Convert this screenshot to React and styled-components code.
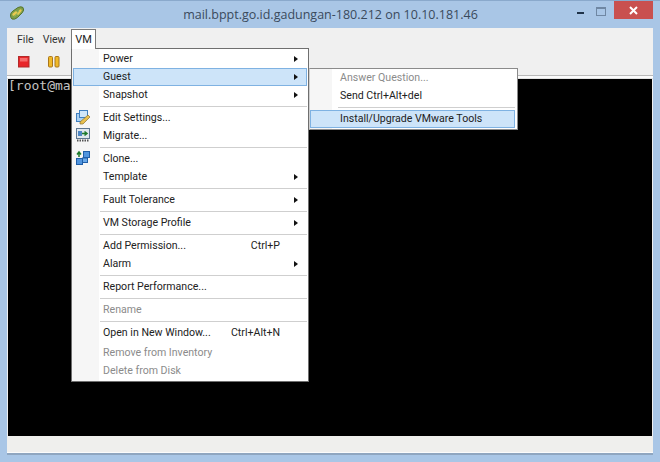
import React from 'react';
import styled, { createGlobalStyle } from 'styled-components';

const Global = createGlobalStyle`
  html, body { margin: 0; padding: 0; background: #a9c6e6; }
  body { font-family: Roboto, "Open Sans", sans-serif; font-size: 10.6px; line-height: 14px; color: #1c1c1c; }
`;

const Frame = styled.div`
  position: relative;
  width: 660px;
  height: 462px;
  box-sizing: border-box;
  padding: 0 7px 7px 7px;
  display: flex;
  flex-direction: column;
  background: #a9c6e6;
  border-top: 1px solid #8aa9cc;
  overflow: hidden;
`;

const TitleBar = styled.div`
  height: 27px;
  flex: none;
  display: flex;
  align-items: flex-start;
`;

const AppIcon = styled.svg`
  width: 16px;
  height: 16px;
  margin: 4px 0 0 2px;
  flex: none;
`;

const Title = styled.div`
  flex: 1;
  text-align: center;
  font-family: "Open Sans", sans-serif;
  font-size: 12.5px;
  line-height: 27px;
  color: #3a4a5c;
  padding-left: 59px;
`;

const Controls = styled.div`
  display: flex;
  align-items: flex-start;
  flex: none;
`;

const MinButton = styled.div`
  width: 7px;
  height: 2px;
  background: #1f3248;
  margin: 11px 12px 0 0;
`;

const MaxButton = styled.div`
  width: 8px;
  height: 6px;
  box-sizing: content-box;
  border: 1px solid #6f87a3;
  border-top-width: 2px;
  margin: 6px 8px 0 0;
`;

const CloseButton = styled.div`
  width: 39px;
  height: 18px;
  background: #c9504f;
  color: #fff;
  display: flex;
  align-items: center;
  justify-content: center;
`;

const Client = styled.div`
  flex: 1;
  display: flex;
  flex-direction: column;
  background: #f0f0f0;
  min-height: 0;
  border-bottom: 2px solid #8fa6c0;
`;

const MenuBar = styled.div`
  height: 20px;
  flex: none;
  display: flex;
  align-items: center;
  padding: 3px 0 0 10px;
  box-sizing: border-box;
  gap: 9px;
  color: #333;
`;

const MenuBarItem = styled.span`
  line-height: 17px;
`;

const Toolbar = styled.div`
  height: 27px;
  flex: none;
  display: flex;
  align-items: flex-start;
  padding: 8px 0 0 11px;
  gap: 18px;
  box-sizing: border-box;
`;

const ToolIcon = styled.svg`
  width: 12px;
  height: 12px;
  flex: none;
`;

const Rule = styled.div`
  height: 4px;
  flex: none;
  box-sizing: border-box;
  background: #fbfbfb;
  border-top: 1px solid #b9b9b9;
  border-bottom: 1px solid #e2e2e2;
`;

const Console = styled.div`
  flex: 1;
  margin: 0 1px;
  background: #000;
  color: #c4c4c4;
  font-family: "DejaVu Sans Mono", monospace;
  font-size: 13px;
  line-height: 14px;
  white-space: pre;
  overflow: hidden;
`;

const StatusBar = styled.div`
  height: 16px;
  flex: none;
  background: #efefed;
  border-bottom: 1px solid #fbfbfb;
`;

const VmTab = styled.div`
  position: absolute;
  left: 71px;
  top: 28px;
  width: 25px;
  height: 20px;
  box-sizing: border-box;
  background: #fff;
  border: 1px solid #7a7a7a;
  border-bottom: none;
  color: #222;
  font-size: 11px;
  text-align: center;
  line-height: 19px;
  z-index: 3;
`;

const DropMenu = styled.div`
  position: absolute;
  left: 71px;
  top: 47px;
  width: 238px;
  height: 334px;
  box-sizing: border-box;
  padding: 1px 1px 0;
  background: linear-gradient(90deg, #f6f6f6 0, #f6f6f6 27px, #fff 27px);
  border: 1px solid #6f6f6f;
  z-index: 2;
`;

const Row = styled.div`
  position: relative;
  height: 18px;
  box-sizing: border-box;
  display: flex;
  align-items: center;
  padding: 0 8px 0 29px;
  margin-top: ${(p) => p.$gap || 0}px;
  color: ${(p) => (p.$disabled ? '#8b8b8b' : '#222')};
  background: ${(p) => (p.$active ? '#cde4f9' : 'transparent')};
  border: 1px solid ${(p) => (p.$active ? '#7fb2e2' : 'transparent')};
`;

const RowLabel = styled.span`
  flex: 1;
  white-space: nowrap;
`;

const Shortcut = styled.span`
  position: absolute;
  right: 26px;
  white-space: nowrap;
`;

const Arrow = styled.span`
  width: 0;
  height: 0;
  border-left: 4px solid #111;
  border-top: 3.5px solid transparent;
  border-bottom: 3.5px solid transparent;
`;

const RowIcon = styled.svg`
  position: absolute;
  left: 1px;
  top: -1px;
  width: 16px;
  height: 16px;
`;

const Divider = styled.div`
  height: 5px;
  margin-left: 27px;
  display: flex;
  align-items: center;
  &::after {
    content: '';
    flex: 1;
    height: 1px;
    background: #cfcfcf;
  }
`;

const SubMenu = styled.div`
  position: absolute;
  left: 309px;
  top: 67px;
  width: 209px;
  height: 62px;
  box-sizing: border-box;
  padding: 0 2px 0 0;
  background: linear-gradient(90deg, #f6f6f6 0, #f6f6f6 22px, #fff 22px);
  border: 1px solid #8b8b8b;
  border-left-color: #d0d0d0;
  z-index: 4;
`;

const SubRow = styled(Row)`
  padding-left: 29px;
`;

const SubDivider = styled(Divider)`
  margin-left: 28px;
`;

const LinkIcon = () => (
  <AppIcon viewBox="0 0 16 16">
    <path d="M1.5 10 Q1.5 7.5 4 6 L9 2.5 Q12 1 14 2.5 Q15.5 5 13.5 7.5 L8.5 12.5 Q5.5 15 3 14 Q1.5 13 1.5 10 Z" fill="#7e9f4a" stroke="#56752c" />
    <path d="M4.5 9.5 L7 7.5 M9 8.5 L11.5 5.5" fill="none" stroke="#e9c94f" strokeWidth="2.4" strokeLinecap="round" />
    <path d="M5.5 11.5 L10 6" fill="none" stroke="#9ab85a" strokeWidth="1" />
  </AppIcon>
);

const StopIcon = () => (
  <ToolIcon viewBox="0 0 12 12">
    <rect x="0.5" y="0.5" width="10.5" height="10.5" fill="#e8262a" stroke="#b22a2a" />
    <rect x="2" y="2" width="7.5" height="3.5" fill="#f56a6a" />
  </ToolIcon>
);

const PauseIcon = () => (
  <ToolIcon viewBox="0 0 12 12">
    <rect x="0.5" y="0.5" width="4" height="10.5" rx="1" fill="#f0b928" stroke="#a9761a" />
    <rect x="7" y="0.5" width="4" height="10.5" rx="1" fill="#f0b928" stroke="#a9761a" />
  </ToolIcon>
);

const EditIcon = () => (
  <RowIcon viewBox="0 0 16 16">
    <rect x="1.5" y="4.5" width="8" height="8" fill="#a9d0f2" stroke="#3f7fc0" />
    <rect x="4.5" y="1.5" width="8" height="7" fill="#cfe6fa" stroke="#3f7fc0" />
    <path d="M13 6 L15 8 L8 15 L5 15 L5 13 Z" fill="#e9c04e" stroke="#8a7330" strokeWidth="0.7" />
  </RowIcon>
);

const MigrateIcon = () => (
  <RowIcon viewBox="0 0 16 16">
    <rect x="1.5" y="1.5" width="13" height="10" fill="#dfe7ee" stroke="#5d7690" />
    <rect x="3" y="4" width="4" height="5" fill="#4d86c4" />
    <path d="M7 6.5 H11 M9.5 4.5 L12 6.5 L9.5 8.5" fill="none" stroke="#1e7a2c" strokeWidth="1.5" />
    <path d="M2 13.5 H14" stroke="#555" strokeWidth="2" strokeDasharray="1.5 1" />
  </RowIcon>
);

const CloneIcon = () => (
  <RowIcon viewBox="0 0 16 16">
    <rect x="8.5" y="1.5" width="6" height="6" fill="#4f94de" stroke="#1f5ea8" />
    <rect x="1.5" y="8.5" width="6" height="6" fill="#4f94de" stroke="#1f5ea8" />
    <rect x="7.5" y="8" width="5" height="4.5" fill="#6aa9e8" stroke="#1f5ea8" />
    <path d="M4 7 V3 M2 4.5 L4 2 L6 4.5" fill="none" stroke="#1c7a2c" strokeWidth="1.5" />
  </RowIcon>
);

const vmMenu = [
  { label: 'Power', arrow: true },
  { label: 'Guest', arrow: true, active: true },
  { label: 'Snapshot', arrow: true },
  { divider: true },
  { label: 'Edit Settings...', icon: <EditIcon /> },
  { label: 'Migrate...', icon: <MigrateIcon /> },
  { divider: true },
  { label: 'Clone...', icon: <CloneIcon /> },
  { label: 'Template', arrow: true },
  { divider: true },
  { label: 'Fault Tolerance', arrow: true },
  { divider: true },
  { label: 'VM Storage Profile', arrow: true },
  { divider: true },
  { label: 'Add Permission...', shortcut: 'Ctrl+P' },
  { label: 'Alarm', arrow: true },
  { divider: true },
  { label: 'Report Performance...' },
  { divider: true },
  { label: 'Rename', disabled: true },
  { divider: true },
  { label: 'Open in New Window...', shortcut: 'Ctrl+Alt+N' },
  { label: 'Remove from Inventory', disabled: true, gap: 2 },
  { label: 'Delete from Disk', disabled: true },
];

const App = () => (
  <Frame>
    <Global />
    <TitleBar>
      <LinkIcon />
      <Title>mail.bppt.go.id.gadungan-180.212 on 10.10.181.46</Title>
      <Controls>
        <MinButton />
        <MaxButton />
        <CloseButton>
          <svg width="9" height="9" viewBox="0 0 9 9">
            <path d="M1 1 L8 8 M8 1 L1 8" stroke="#fff" strokeWidth="2" />
          </svg>
        </CloseButton>
      </Controls>
    </TitleBar>
    <Client>
      <MenuBar>
        <MenuBarItem>File</MenuBarItem>
        <MenuBarItem>View</MenuBarItem>
      </MenuBar>
      <Toolbar>
        <StopIcon />
        <PauseIcon />
      </Toolbar>
      <Rule />
      <Console>[root@ma</Console>
      <StatusBar />
    </Client>
    <VmTab>VM</VmTab>
    <DropMenu>
      {vmMenu.map((item, i) =>
        item.divider ? (
          <Divider key={i} />
        ) : (
          <Row key={i} $active={item.active} $disabled={item.disabled} $gap={item.gap}>
            {item.icon}
            <RowLabel>{item.label}</RowLabel>
            {item.shortcut && <Shortcut>{item.shortcut}</Shortcut>}
            {item.arrow && <Arrow />}
          </Row>
        )
      )}
    </DropMenu>
    <SubMenu>
      <SubRow $disabled>
        <RowLabel>Answer Question...</RowLabel>
      </SubRow>
      <SubRow>
        <RowLabel>Send Ctrl+Alt+del</RowLabel>
      </SubRow>
      <SubDivider />
      <SubRow $active>
        <RowLabel>Install/Upgrade VMware Tools</RowLabel>
      </SubRow>
    </SubMenu>
  </Frame>
);

export default App;
